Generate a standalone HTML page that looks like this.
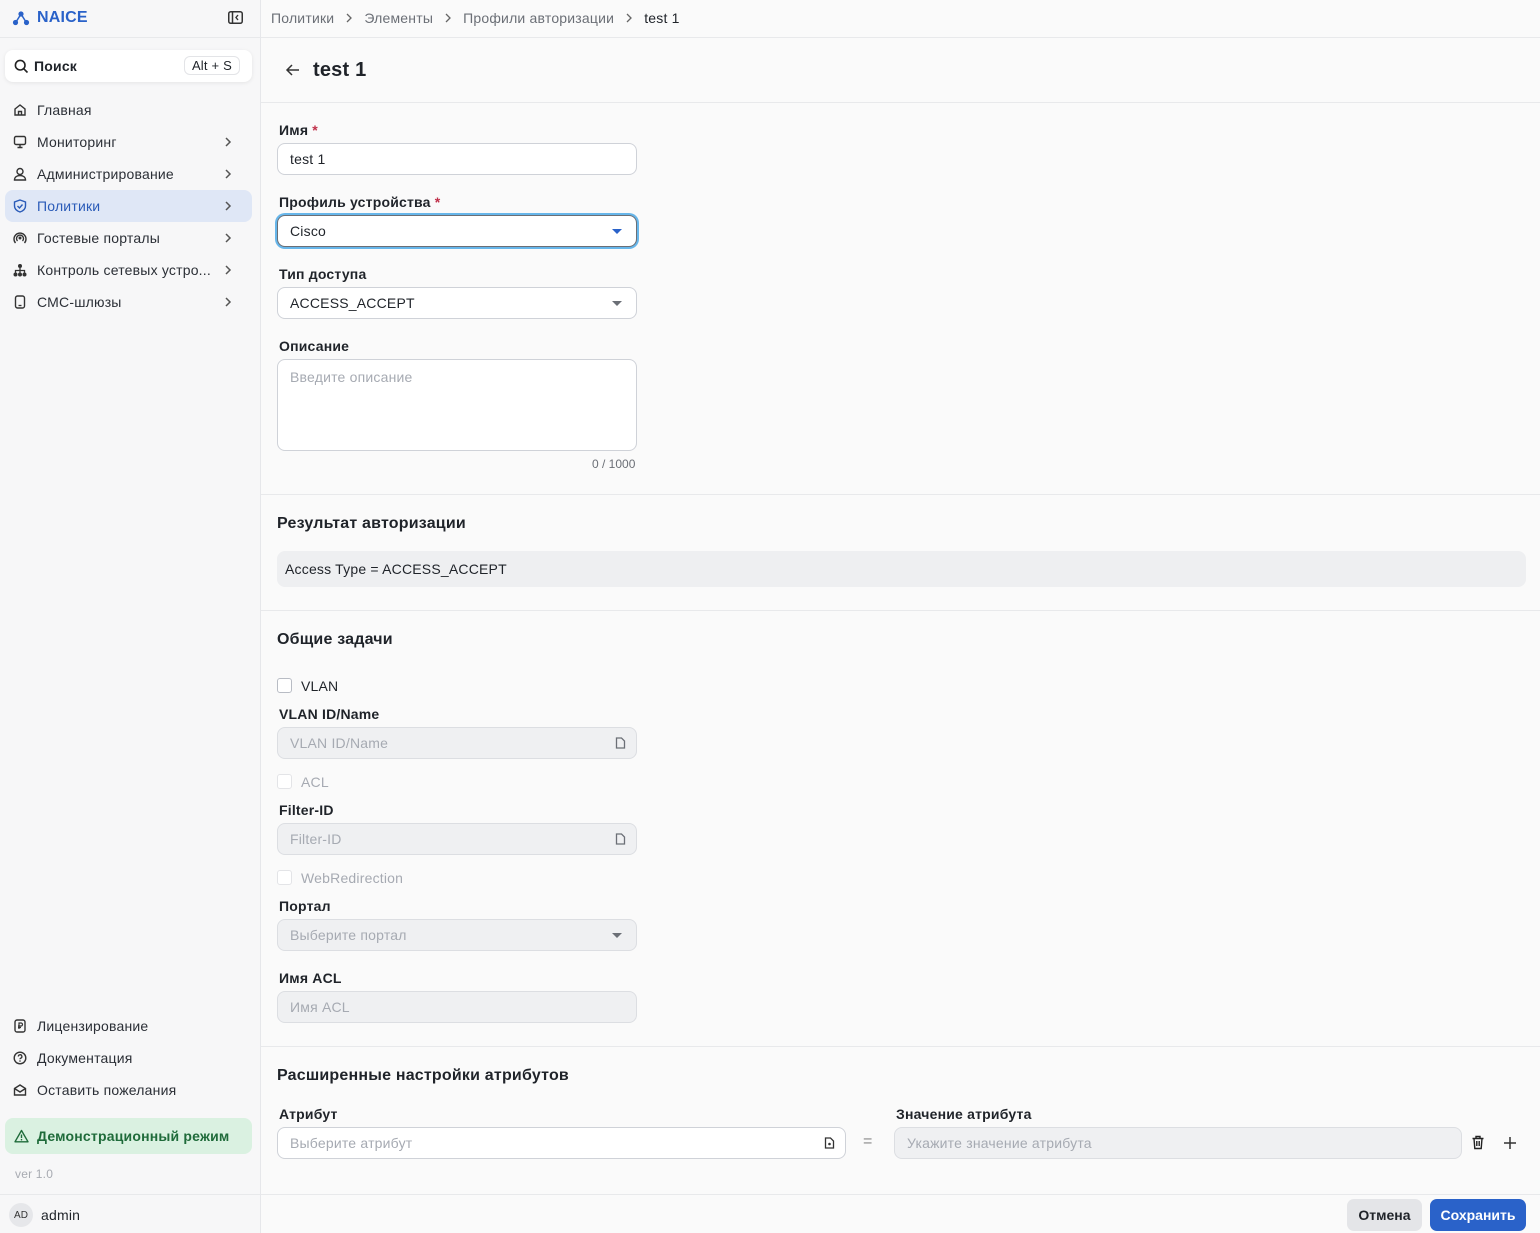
<!DOCTYPE html>
<html><head><meta charset="utf-8"><style>
*{box-sizing:border-box;margin:0;padding:0}
body{width:1540px;height:1233px;overflow:hidden;background:#fafafa;font-family:"Liberation Sans","DejaVu Sans",sans-serif;font-size:14px;color:#1f2329;position:relative;letter-spacing:0.2px}
.abs{position:absolute}
.sb{left:0;top:0;width:261px;height:1233px;background:#f7f7f8;border-right:1px solid #e6e7ea}
.nav{position:absolute;left:5px;width:247px;height:32px;border-radius:8px;display:flex;align-items:center;padding-left:8px;font-size:14px;color:#2b2f36}
.nav svg{margin-right:10px}
.nav .ch{position:absolute;right:10px;top:10px}
.hl{left:261px;right:0;height:1px;background:#e8e9eb}
.lbl{position:absolute;left:279px;font-weight:bold;font-size:14px;color:#1f2329}
.req{color:#c0304a}
.inp{position:absolute;left:277px;width:360px;height:32px;border:1px solid #cfd2d8;border-radius:8px;background:#fff;padding-left:12px;display:flex;align-items:center;font-size:14px}
.dis{background:#eff0f2;border-color:#dcdee2;color:#a6aab2}
.ph{color:#a6aab2}
.caret{position:absolute;right:14px;top:13px;width:0;height:0;border-left:5px solid transparent;border-right:5px solid transparent;border-top:5px solid #6b6f76}
.h2{position:absolute;left:277px;font-size:16px;font-weight:bold;color:#1f2329}
.cb{position:absolute;left:277px;width:15px;height:15px;border:1.5px solid #b8bcc4;border-radius:3px;background:#fff}
.cbt{position:absolute;left:301px;font-size:14px}
.bc svg{margin:0 12px}
</style></head><body>
<div class="abs sb">
  <div class="abs" style="left:12px;top:9px;display:flex;align-items:center;color:#2a62c9;font-weight:bold;font-size:16px">
    <svg width="18" height="16" viewBox="0 0 18 16"><line x1="9" y1="4" x2="4" y2="12" stroke="#2a62c9" stroke-width="1.5"/><line x1="9" y1="4" x2="14" y2="12" stroke="#2a62c9" stroke-width="1.5"/><circle cx="9" cy="4" r="2.6" fill="#2a62c9"/><circle cx="3.5" cy="12.5" r="2.6" fill="#2a62c9"/><circle cx="14.5" cy="12.5" r="2.6" fill="#2a62c9"/></svg>
    <span style="margin-left:7px">NAICE</span></div>
  <svg class="abs" style="left:228px;top:11px" width="15" height="13" viewBox="0 0 15 13"><rect x="0.75" y="0.75" width="13.5" height="11.5" rx="2" fill="none" stroke="#333" stroke-width="1.5"/><line x1="4.5" y1="1" x2="4.5" y2="12" stroke="#333" stroke-width="1.5"/><path d="M10 4l-2 2.5 2 2.5" fill="none" stroke="#333" stroke-width="1.4"/></svg>
  <div class="abs" style="left:0;top:37px;width:260px;height:1px;background:#e8e9eb"></div>
  <div class="abs" style="left:5px;top:50px;width:247px;height:32px;background:#fff;border-radius:8px;box-shadow:0 1px 4px rgba(0,0,0,.08);display:flex;align-items:center;padding-left:9px;font-weight:bold;font-size:14px">
    <svg width="15" height="15" viewBox="0 0 15 15"><circle cx="6.2" cy="6.2" r="4.8" fill="none" stroke="#222" stroke-width="1.6"/><line x1="9.8" y1="9.8" x2="13.5" y2="13.5" stroke="#222" stroke-width="1.6"/></svg>
    <span style="margin-left:5px">Поиск</span>
    <span class="abs" style="right:12px;top:6px;border:1px solid #e3e4e7;border-radius:6px;padding:1px 7px;font-weight:normal;font-size:13px">Alt + S</span></div>
  <div class="nav" style="top:94px"><svg width="14" height="14" viewBox="0 0 14 14"><path d="M2 6l5-4 5 4v6H2z M5.5 12V8.5h3V12" fill="none" stroke="#333" stroke-width="1.4"/></svg>Главная</div>
  <div class="nav" style="top:126px"><svg width="14" height="14" viewBox="0 0 14 14"><rect x="1.5" y="1.5" width="11" height="8" rx="1.5" fill="none" stroke="#333" stroke-width="1.4"/><path d="M7 9.5v3M4.5 12.5h5" stroke="#333" stroke-width="1.4"/></svg>Мониторинг<svg class="ch" width="8" height="12" viewBox="0 0 8 12"><path d="M2 2l4 4-4 4" fill="none" stroke="#555" stroke-width="1.5"/></svg></div>
  <div class="nav" style="top:158px"><svg width="14" height="14" viewBox="0 0 14 14"><circle cx="7" cy="4.5" r="3" fill="none" stroke="#333" stroke-width="1.4"/><path d="M1.5 13c0-3 2.5-4.5 5.5-4.5s5.5 1.5 5.5 4.5z" fill="none" stroke="#333" stroke-width="1.4"/></svg>Администрирование<svg class="ch" width="8" height="12" viewBox="0 0 8 12"><path d="M2 2l4 4-4 4" fill="none" stroke="#555" stroke-width="1.5"/></svg></div>
  <div class="nav" style="top:190px;background:#dfe7f6;color:#2a5bb8"><svg width="14" height="14" viewBox="0 0 14 14"><path d="M7 1l5.5 2v4c0 3-2.5 5-5.5 6-3-1-5.5-3-5.5-6V3z" fill="none" stroke="#2a5bb8" stroke-width="1.4"/><path d="M4.5 7l2 2 3-3.5" fill="none" stroke="#2a5bb8" stroke-width="1.4"/></svg>Политики<svg class="ch" width="8" height="12" viewBox="0 0 8 12"><path d="M2 2l4 4-4 4" fill="none" stroke="#555" stroke-width="1.5"/></svg></div>
  <div class="nav" style="top:222px"><svg width="14" height="14" viewBox="0 0 14 14"><circle cx="7" cy="7" r="1.5" fill="#333"/><path d="M4.5 10a3.5 3.5 0 1 1 5 0M2.5 12a6 6 0 1 1 9 0" fill="none" stroke="#333" stroke-width="1.4"/></svg>Гостевые порталы<svg class="ch" width="8" height="12" viewBox="0 0 8 12"><path d="M2 2l4 4-4 4" fill="none" stroke="#555" stroke-width="1.5"/></svg></div>
  <div class="nav" style="top:254px"><svg width="14" height="14" viewBox="0 0 14 14"><circle cx="7" cy="3" r="2" fill="#333"/><circle cx="2.5" cy="11.5" r="2" fill="#333"/><circle cx="7" cy="11.5" r="2" fill="#333"/><circle cx="11.5" cy="11.5" r="2" fill="#333"/><path d="M7 5v4.5M2.5 9.5V7.5h9v2" fill="none" stroke="#333" stroke-width="1.3"/></svg>Контроль сетевых устро...<svg class="ch" width="8" height="12" viewBox="0 0 8 12"><path d="M2 2l4 4-4 4" fill="none" stroke="#555" stroke-width="1.5"/></svg></div>
  <div class="nav" style="top:286px"><svg width="14" height="14" viewBox="0 0 14 14"><rect x="2.5" y="1" width="9" height="12" rx="2" fill="none" stroke="#333" stroke-width="1.4"/><line x1="5.5" y1="10.5" x2="8.5" y2="10.5" stroke="#333" stroke-width="1.3"/></svg>СМС-шлюзы<svg class="ch" width="8" height="12" viewBox="0 0 8 12"><path d="M2 2l4 4-4 4" fill="none" stroke="#555" stroke-width="1.5"/></svg></div>
  <div class="nav" style="top:1010px"><svg width="14" height="14" viewBox="0 0 14 14"><rect x="2" y="1" width="10" height="12" rx="2" fill="none" stroke="#333" stroke-width="1.4"/><path d="M6 10V4h2a1.5 1.5 0 0 1 0 3H5M5 8.5h3" fill="none" stroke="#333" stroke-width="1.2"/></svg>Лицензирование</div>
  <div class="nav" style="top:1042px"><svg width="14" height="14" viewBox="0 0 14 14"><circle cx="7" cy="7" r="5.8" fill="none" stroke="#333" stroke-width="1.4"/><path d="M5.3 5.5a1.8 1.8 0 1 1 2.4 1.7c-.5.2-.7.5-.7 1.1" fill="none" stroke="#333" stroke-width="1.3"/><circle cx="7" cy="10" r=".8" fill="#333"/></svg>Документация</div>
  <div class="nav" style="top:1074px"><svg width="14" height="14" viewBox="0 0 14 14"><path d="M1.5 5.5L7 2l5.5 3.5V12h-11z M1.5 5.5L7 9l5.5-3.5" fill="none" stroke="#333" stroke-width="1.4"/></svg>Оставить пожелания</div>
  <div class="abs" style="left:5px;top:1118px;width:247px;height:36px;background:#daf1e1;border-radius:8px;display:flex;align-items:center;padding-left:9px;color:#1f6b3a;font-weight:bold;font-size:14px"><svg width="15" height="14" viewBox="0 0 15 14"><path d="M7.5 1.5L14 12.8H1z" fill="none" stroke="#1f6b3a" stroke-width="1.4" stroke-linejoin="round"/><path d="M7.5 5.5v3.5" stroke="#1f6b3a" stroke-width="1.4"/><circle cx="7.5" cy="10.7" r=".8" fill="#1f6b3a"/></svg><span style="margin-left:8px">Демонстрационный режим</span></div>
  <div class="abs" style="left:15px;top:1167px;font-size:12px;color:#a8abb2">ver 1.0</div>
  <div class="abs" style="left:0;top:1194px;width:260px;height:1px;background:#e8e9eb"></div>
  <div class="abs" style="left:9px;top:1203px;width:24px;height:24px;border-radius:50%;background:#e6e7ea;font-size:10px;display:flex;align-items:center;justify-content:center;color:#333;letter-spacing:0">AD</div>
  <div class="abs" style="left:41px;top:1207px;font-size:14px">admin</div>
</div>

<div class="abs bc" style="left:271px;top:10px;font-size:14px;color:#6b6f76;display:flex;align-items:center">Политики<svg width="6" height="10" viewBox="0 0 6 10"><path d="M1 1l4 4-4 4" fill="none" stroke="#666" stroke-width="1.3"/></svg>Элементы<svg width="6" height="10" viewBox="0 0 6 10"><path d="M1 1l4 4-4 4" fill="none" stroke="#666" stroke-width="1.3"/></svg>Профили авторизации<svg width="6" height="10" viewBox="0 0 6 10"><path d="M1 1l4 4-4 4" fill="none" stroke="#666" stroke-width="1.3"/></svg><span style="color:#1f2329">test 1</span></div>
<div class="abs hl" style="top:37px"></div>
<svg class="abs" style="left:285px;top:63px" width="15" height="14" viewBox="0 0 15 14"><path d="M14 7H2M7 2L2 7l5 5" fill="none" stroke="#333" stroke-width="1.5"/></svg>
<div class="abs" style="left:313px;top:59px;font-size:20px;font-weight:bold">test 1</div>
<div class="abs hl" style="top:102px"></div>

<div class="lbl" style="top:122px">Имя <span class="req">*</span></div>
<div class="inp" style="top:143px">test 1</div>
<div class="lbl" style="top:194px">Профиль устройства <span class="req">*</span></div>
<div class="inp" style="top:215px;border-color:#6b6f76;box-shadow:0 0 0 2px #67b6ea">Cisco<span class="caret" style="border-top-color:#2a62c9"></span></div>
<div class="lbl" style="top:266px">Тип доступа</div>
<div class="inp" style="top:287px">ACCESS_ACCEPT<span class="caret"></span></div>
<div class="lbl" style="top:338px">Описание</div>
<div class="inp" style="top:359px;height:92px;align-items:flex-start;padding-top:9px"><span class="ph">Введите описание</span></div>
<div class="abs" style="left:592px;top:457px;font-size:12px;color:#6b6f76;letter-spacing:0">0 / 1000</div>
<div class="abs hl" style="top:494px"></div>

<div class="h2" style="top:515px">Результат авторизации</div>
<div class="abs" style="left:277px;top:551px;width:1249px;height:36px;background:#eeeff1;border-radius:8px;padding-left:8px;display:flex;align-items:center">Access Type = ACCESS_ACCEPT</div>
<div class="abs hl" style="top:610px"></div>

<div class="h2" style="top:631px">Общие задачи</div>
<div class="cb" style="top:678px"></div><div class="cbt" style="top:678px">VLAN</div>
<div class="lbl" style="top:706px">VLAN ID/Name</div>
<div class="inp dis" style="top:727px">VLAN ID/Name<svg class="abs" style="right:10px;top:9px" width="11" height="12" viewBox="0 0 11 12"><path d="M1.5 1h5l3 3v7h-8z" fill="none" stroke="#6b6f76" stroke-width="1.3"/></svg></div>
<div class="cb" style="top:774px;border-color:#e3e4e7"></div><div class="cbt" style="top:774px;color:#a6aab2">ACL</div>
<div class="lbl" style="top:802px">Filter-ID</div>
<div class="inp dis" style="top:823px">Filter-ID<svg class="abs" style="right:10px;top:9px" width="11" height="12" viewBox="0 0 11 12"><path d="M1.5 1h5l3 3v7h-8z" fill="none" stroke="#6b6f76" stroke-width="1.3"/></svg></div>
<div class="cb" style="top:870px;border-color:#e3e4e7"></div><div class="cbt" style="top:870px;color:#a6aab2">WebRedirection</div>
<div class="lbl" style="top:898px">Портал</div>
<div class="inp dis" style="top:919px">Выберите портал<span class="caret"></span></div>
<div class="lbl" style="top:970px">Имя ACL</div>
<div class="inp dis" style="top:991px">Имя ACL</div>
<div class="abs hl" style="top:1046px"></div>

<div class="h2" style="top:1067px">Расширенные настройки атрибутов</div>
<div class="lbl" style="top:1106px">Атрибут</div>
<div class="inp" style="top:1127px;width:569px"><span class="ph">Выберите атрибут</span><svg class="abs" style="right:10px;top:9px" width="11" height="12" viewBox="0 0 11 12"><path d="M1.5 1h5l3 3v7h-8z" fill="none" stroke="#333" stroke-width="1.3"/><circle cx="5.5" cy="7" r="1.3" fill="#333"/></svg></div>
<div class="abs" style="left:863px;top:1133px;font-size:16px;color:#888">=</div>
<div class="lbl" style="top:1106px;left:896px">Значение атрибута</div>
<div class="inp dis" style="top:1127px;left:894px;width:568px">Укажите значение атрибута</div>
<svg class="abs" style="left:1471px;top:1135px" width="14" height="15" viewBox="0 0 14 15"><path d="M1.5 3.5h11M5 3.5V1.5h4v2M3 3.5l.8 10h6.4l.8-10M5.8 6v5M8.2 6v5" fill="none" stroke="#222" stroke-width="1.4"/></svg>
<svg class="abs" style="left:1503px;top:1136px" width="14" height="14" viewBox="0 0 14 14"><path d="M7 1v12M1 7h12" stroke="#333" stroke-width="1.5"/></svg>
<div class="abs hl" style="top:1194px"></div>
<div class="abs" style="left:1347px;top:1199px;width:75px;height:32px;background:#e4e5e8;border-radius:7px;display:flex;align-items:center;justify-content:center;font-weight:bold;letter-spacing:0">Отмена</div>
<div class="abs" style="left:1430px;top:1199px;width:96px;height:32px;background:#2a62c9;border-radius:7px;display:flex;align-items:center;justify-content:center;font-weight:bold;color:#fff;letter-spacing:0">Сохранить</div>
</body></html>
